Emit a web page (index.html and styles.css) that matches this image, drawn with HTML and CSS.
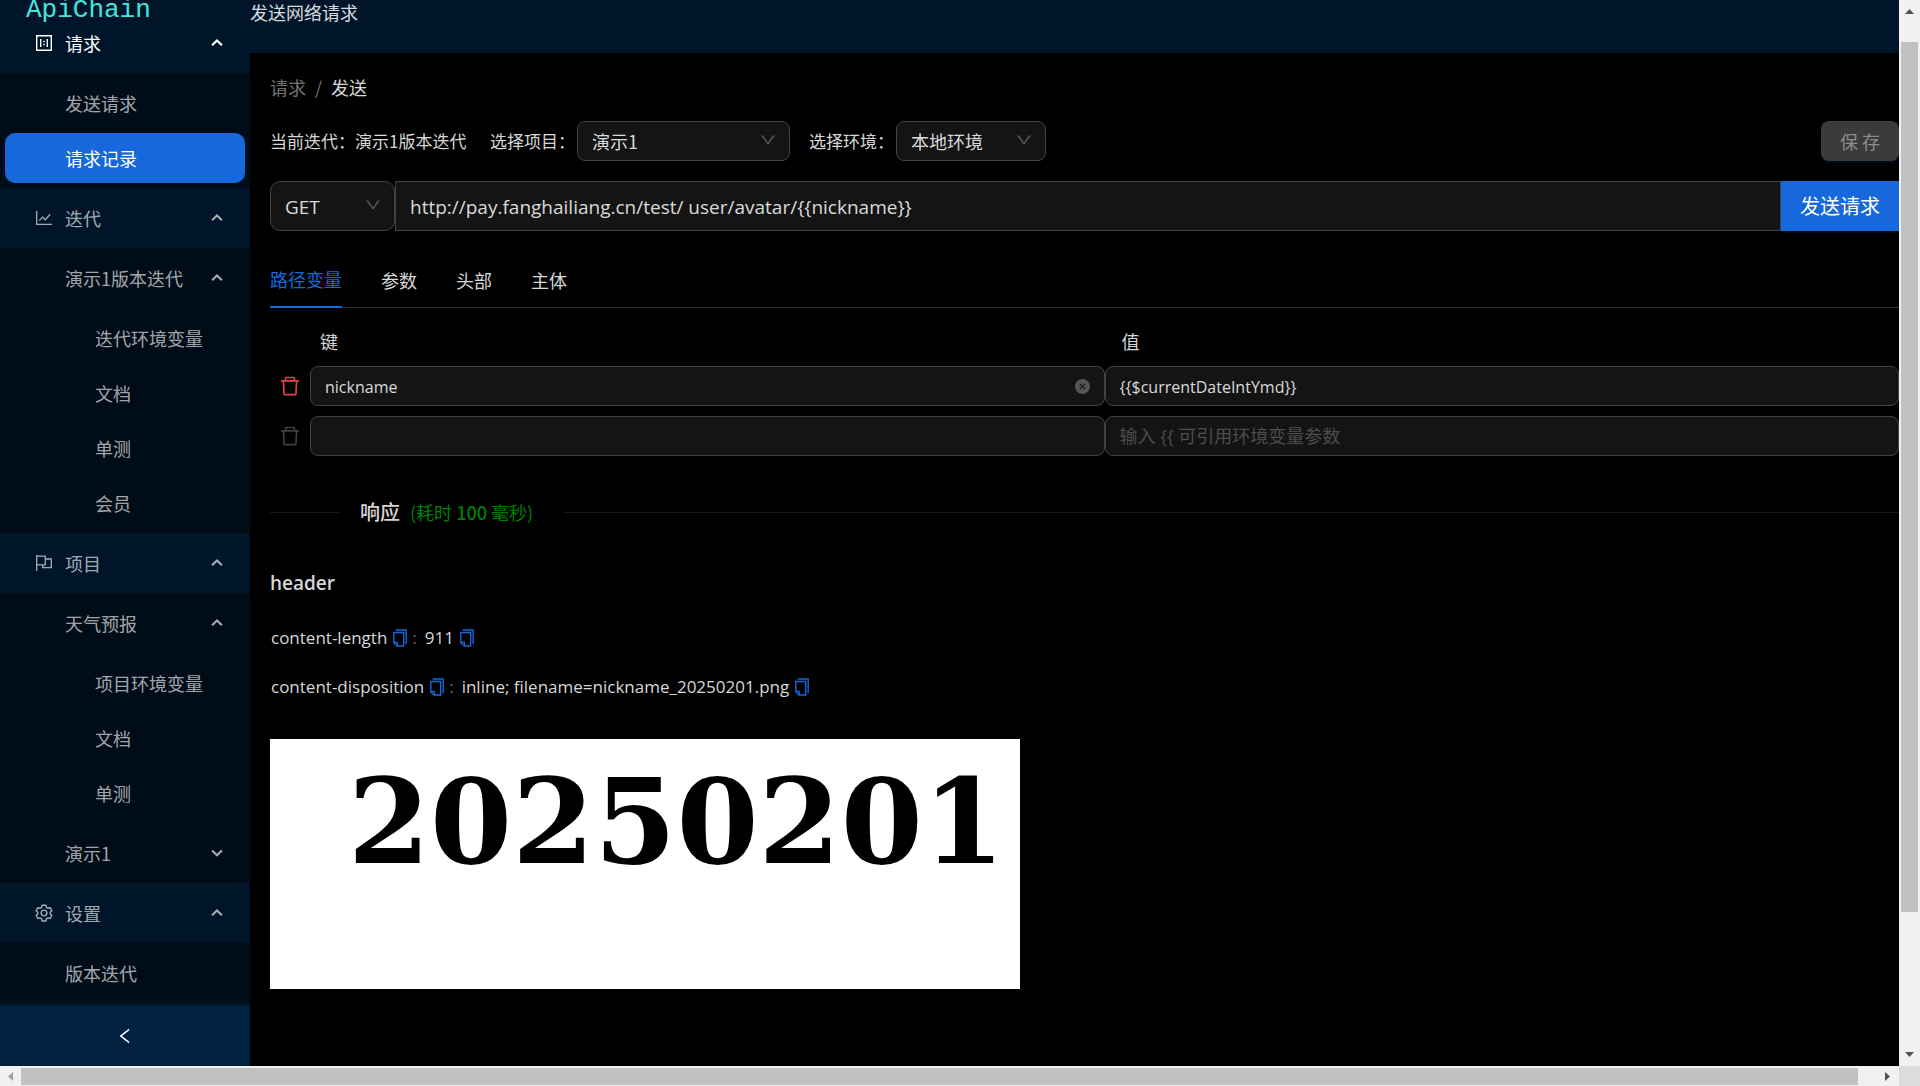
FILE: index.html
```html
<!DOCTYPE html>
<html lang="zh-CN">
<head>
<meta charset="utf-8">
<meta name="viewport" content="width=device-width, initial-scale=1">
<title>ApiChain</title>
<link rel="stylesheet" href="styles.css">
</head>
<body>
<svg class="sprite" aria-hidden="true">
  <symbol id="i-up" viewBox="0 0 12 12"><path d="M1.800 8 6 3.900l4.200 4.100" fill="none" stroke="currentColor" stroke-width="1.800"/></symbol>
  <symbol id="i-down" viewBox="0 0 12 12"><path d="M1.800 3.900 6 8l4.200-4.100" fill="none" stroke="currentColor" stroke-width="1.800"/></symbol>
  <symbol id="i-select" viewBox="0 0 1024 1024"><path fill="currentColor" d="M884 256h-75c-5.100 0-9.900 2.500-12.900 6.600L512 654.200 227.900 262.600c-3-4.100-7.800-6.600-12.900-6.600h-75c-6.500 0-10.300 7.400-6.500 12.700l352.600 486.100c12.800 17.600 39 17.600 51.700 0l352.600-486.100c3.900-5.300.1-12.700-6.400-12.700z"/></symbol>
  <symbol id="i-left" viewBox="0 0 1024 1024"><path fill="currentColor" d="M724 218.300V141c0-6.700-7.700-10.400-12.900-6.300L260.300 486.800a31.860 31.860 0 0 0 0 50.300l450.800 352.100c5.300 4.100 12.900.4 12.900-6.300v-77.300c0-4.900-2.300-9.600-6.100-12.600l-360-281 360-281.100c3.800-3 6.100-7.700 6.100-12.600z"/></symbol>
  <symbol id="i-trash" viewBox="0 0 1024 1024"><path fill="currentColor" d="M360 184h-8c4.400 0 8-3.600 8-8v8h304v-8c0 4.400 3.600 8 8 8h-8v72h72v-80c0-35.300-28.700-64-64-64H352c-35.300 0-64 28.700-64 64v80h72v-72zm504 72H160c-17.700 0-32 14.300-32 32v32c0 4.400 3.600 8 8 8h60.400l24.700 523c1.600 34.100 29.800 61 63.900 61h454c34.200 0 62.300-26.800 63.900-61l24.700-523H888c4.400 0 8-3.600 8-8v-32c0-17.700-14.300-32-32-32zM731.300 840H292.700l-24.200-512h487l-24.200 512z"/></symbol>
  <symbol id="i-copy" viewBox="0 0 1024 1024"><path fill="currentColor" d="M832 64H296c-4.400 0-8 3.600-8 8v56c0 4.400 3.600 8 8 8h496v688c0 4.400 3.600 8 8 8h56c4.400 0 8-3.600 8-8V96c0-17.700-14.300-32-32-32zM704 192H192c-17.700 0-32 14.300-32 32v530.700c0 8.500 3.400 16.600 9.400 22.600l173.300 173.300c2.200 2.200 4.700 4 7.400 5.500v1.900h4.200c3.500 1.300 7.200 2 11 2H704c17.700 0 32-14.300 32-32V224c0-17.700-14.300-32-32-32zM350 856.200 263.900 770H350v86.200zM664 888H414V746c0-22.100-17.900-40-40-40H232V264h432v624z"/></symbol>
  <symbol id="i-clear" viewBox="0 0 16 16"><circle cx="8" cy="8" r="8" fill="currentColor"/><path d="m5.200 5.200 5.600 5.600m0-5.600-5.600 5.600" stroke="#141414" stroke-width="1.300"/></symbol>
  <symbol id="i-ratio" viewBox="0 0 16 16"><path fill="none" stroke="currentColor" stroke-width="1.400" d="M.700.700h14.600v14.600H.700z"/><path fill="currentColor" d="M4 4h1.400v8H4zM10.600 4H12v8h-1.400zM7.300 5.700h1.400v1.500H7.300zM7.300 8.800h1.400v1.500H7.300z"/></symbol>
  <symbol id="i-chart" viewBox="0 0 16 16"><path fill="none" stroke="currentColor" stroke-width="1.300" d="M.7 1v13.300H16M3.300 10.600l3.200-3.500 2.700 2.600 5-5.500"/></symbol>
  <symbol id="i-flag" viewBox="0 0 16 16"><path fill="none" stroke="currentColor" stroke-width="1.300" d="M.7 0v16M.7 1.200h8.600v8.600H.7M9.500 4h5.800v8.700H6.700V9.800"/></symbol>
  <symbol id="i-gear" viewBox="0 0 18 18"><path fill="none" stroke="currentColor" stroke-width="1.400" stroke-linejoin="round" d="M7.200 1.200h3.600l.6 2.200 1.500.9 2.200-.6 1.800 3-1.600 1.600v1.600l1.600 1.600-1.800 3-2.200-.6-1.500.9-.6 2.200H7.200l-.6-2.200-1.500-.9-2.200.6-1.800-3 1.600-1.600V8.200L1.100 6.700l1.800-3 2.200.6 1.500-.9z"/><circle cx="9" cy="9" r="2.900" fill="none" stroke="currentColor" stroke-width="1.400"/></symbol>
</svg>
<div class="window">
  <div class="app">
    <aside class="sider">
      <div class="brand"><span class="logo">ApiChain</span></div>
      <nav class="menu">
        <button class="title current" type="button"><svg class="icon"><use href="#i-ratio"/></svg><span>请求</span><svg class="arrow"><use href="#i-up"/></svg></button>
        <div class="sub">
          <a class="item" href="#send">发送请求</a>
          <a class="item active" href="#history">请求记录</a>
        </div>
        <button class="title" type="button"><svg class="icon"><use href="#i-chart"/></svg><span>迭代</span><svg class="arrow"><use href="#i-up"/></svg></button>
        <div class="sub">
          <button class="item" type="button"><span>演示1版本迭代</span><svg class="arrow"><use href="#i-up"/></svg></button>
          <div class="nested">
            <a class="item" href="#iter-env">迭代环境变量</a>
            <a class="item" href="#iter-doc">文档</a>
            <a class="item" href="#iter-test">单测</a>
            <a class="item" href="#iter-member">会员</a>
          </div>
        </div>
        <button class="title" type="button"><svg class="icon"><use href="#i-flag"/></svg><span>项目</span><svg class="arrow"><use href="#i-up"/></svg></button>
        <div class="sub">
          <button class="item" type="button"><span>天气预报</span><svg class="arrow"><use href="#i-up"/></svg></button>
          <div class="nested">
            <a class="item" href="#prj-env">项目环境变量</a>
            <a class="item" href="#prj-doc">文档</a>
            <a class="item" href="#prj-test">单测</a>
          </div>
          <button class="item" type="button"><span>演示1</span><svg class="arrow"><use href="#i-down"/></svg></button>
        </div>
        <button class="title" type="button"><svg class="icon gear"><use href="#i-gear"/></svg><span>设置</span><svg class="arrow"><use href="#i-up"/></svg></button>
        <div class="sub">
          <a class="item" href="#versions">版本迭代</a>
        </div>
      </nav>
      <button class="trigger" type="button" aria-label="收起"><svg><use href="#i-left"/></svg></button>
    </aside>
    <main class="main">
      <header class="header">发送网络请求</header>
      <div class="content">
        <nav class="crumbs"><a href="#request">请求</a><span>/</span><b>发送</b></nav>
        <div class="toolbar">
          <span class="current-iter">当前迭代：演示1版本迭代</span>
          <div class="field"><label for="project">选择项目：</label><span class="select project"><select id="project"><option>演示1</option></select><svg><use href="#i-select"/></svg></span></div>
          <div class="field"><label for="env">选择环境：</label><span class="select env"><select id="env"><option>本地环境</option></select><svg><use href="#i-select"/></svg></span></div>
          <button class="save" type="button" disabled>保 存</button>
        </div>
        <form class="request">
          <span class="select method"><select aria-label="请求方法"><option>GET</option></select><svg><use href="#i-select"/></svg></span>
          <input class="url" type="text" aria-label="请求地址" value="http://pay.fanghailiang.cn/test/ user/avatar/{{nickname}}">
          <button class="send" type="button">发送请求</button>
        </form>
        <div class="tabs" role="tablist">
          <button class="tab on" type="button" role="tab">路径变量</button>
          <button class="tab" type="button" role="tab">参数</button>
          <button class="tab" type="button" role="tab">头部</button>
          <button class="tab" type="button" role="tab">主体</button>
        </div>
        <table class="params">
          <thead><tr><th class="tools"></th><th>键</th><th>值</th></tr></thead>
          <tbody>
            <tr>
              <td class="tools"><button class="remove" type="button" aria-label="删除"><svg><use href="#i-trash"/></svg></button></td>
              <td><div class="box"><input type="text" aria-label="键" value="nickname"><svg class="clear"><use href="#i-clear"/></svg></div></td>
              <td><div class="box"><input type="text" aria-label="值" value="{{$currentDateIntYmd}}"></div></td>
            </tr>
            <tr>
              <td class="tools"><button class="remove off" type="button" aria-label="删除" disabled><svg><use href="#i-trash"/></svg></button></td>
              <td><div class="box"><input type="text" aria-label="键"></div></td>
              <td><div class="box"><input type="text" aria-label="值" placeholder="输入 {{ 可引用环境变量参数"></div></td>
            </tr>
          </tbody>
        </table>
        <div class="divider"><h2>响应</h2><span class="time">(耗时 <b>100</b> 毫秒)</span></div>
        <h3 class="heading">header</h3>
        <dl class="headers">
          <div><dt>content-length<button class="copy" type="button" aria-label="复制"><svg><use href="#i-copy"/></svg></button><i>:</i></dt><dd>911<button class="copy" type="button" aria-label="复制"><svg><use href="#i-copy"/></svg></button></dd></div>
          <div><dt>content-disposition<button class="copy" type="button" aria-label="复制"><svg><use href="#i-copy"/></svg></button><i>:</i></dt><dd>inline; filename=nickname_20250201.png<button class="copy" type="button" aria-label="复制"><svg><use href="#i-copy"/></svg></button></dd></div>
        </dl>
        <div class="preview">20250201</div>
      </div>
    </main>
  </div>
  <div class="vbar"><svg viewBox="0 0 9 5"><path d="M4.500 0 9 5H0z"/></svg><div class="track"><div class="thumb"></div></div><svg viewBox="0 0 9 5"><path d="M4.500 5 9 0H0z"/></svg></div>
  <div class="hbar"><svg class="dim" viewBox="0 0 5 9"><path d="M0 4.500 5 0v9z"/></svg><div class="track"><div class="thumb"></div></div><svg viewBox="0 0 5 9"><path d="M5 4.500 0 0v9z"/></svg></div>
  <div class="corner"></div>
</div>
</body>
</html>
```
FILE: styles.css
```css
* { box-sizing: border-box; }
body {
  margin: 0;
  background: #000;
  color: rgba(255, 255, 255, .85);
  font: 18px/28px "Noto Sans CJK SC", sans-serif;
}
button, input, select { font: inherit; color: inherit; margin: 0; padding: 0; border: 0; background: none; }
a { color: inherit; text-decoration: none; }
svg { display: block; flex: none; }
.sprite { position: absolute; width: 0; height: 0; }

.window { display: grid; grid-template: minmax(0, 1fr) 20px / minmax(0, 1fr) 21px; height: 100vh; }
.app { display: flex; min-height: 0; overflow: hidden; }

/* sidebar */
.sider { display: flex; flex-direction: column; width: 250px; flex: none; background: #001529; color: rgba(255, 255, 255, .65); }
.brand { display: flex; align-items: flex-start; height: 13px; padding-left: 26px; flex: none; }
.logo { color: #4ae3dc; font: 26px/20px "Liberation Mono", monospace; }
.menu { flex: 1; min-height: 0; overflow: hidden; }
.title { display: flex; align-items: center; width: 100%; height: 60px; padding: 0 26px 0 36px; text-align: left; }
.title.current { color: #fff; }
.title span, .item span { flex: 1; }
.icon { width: 16px; height: 16px; margin-right: 13px; }
.icon.gear { width: 18px; height: 18px; margin: 0 12px 0 -1px; }
.arrow { width: 14px; height: 14px; }
.sub { display: flex; flex-direction: column; gap: 5px; padding: 5px 0; background: #000c17; }
.item { display: flex; align-items: center; height: 50px; margin: 0 5px; padding: 0 21px 0 60px; border-radius: 10px; text-align: left; }
.item.active { background: #1668dc; color: #fff; }
.nested { display: flex; flex-direction: column; gap: 5px; padding: 5px 0; }
.nested:last-child { padding-bottom: 0; }
.nested .item { padding-left: 90px; }
.trigger { display: flex; align-items: center; justify-content: center; height: 60px; flex: none; background: #002140; color: #fff; }
.trigger svg { width: 20px; height: 20px; }

/* main column */
.main { flex: 1; min-width: 0; }
.header { height: 53px; background: #001529; line-height: 24px; }
.content { padding: 20px 0 0 20px; }
.crumbs { display: flex; gap: 9px; color: rgba(255, 255, 255, .45); }
.crumbs b { color: rgba(255, 255, 255, .85); font-weight: 400; }
.toolbar { display: flex; align-items: center; gap: 19px; height: 40px; margin-top: 20px; white-space: nowrap; }
.current-iter { min-width: 201px; font-size: 17px; }
.field { display: flex; align-items: center; gap: 2px; }
.field label { font-size: 17px; }
.select { position: relative; display: flex; height: 40px; border: 1px solid #424242; border-radius: 8px; background: #141414; }
.select select { width: 100%; padding: 0 36px 0 14px; appearance: none; outline: 0; }
.select svg { position: absolute; right: 12px; top: 50%; width: 18px; height: 18px; margin-top: -10px; color: rgba(255, 255, 255, .3); pointer-events: none; }
.project { width: 213px; }
.env { width: 150px; }
.save { width: 78px; height: 40px; margin-left: auto; border-radius: 8px; background: #3b3b3b; color: #8c8c8c; box-shadow: 0 2px 0 #00081c; }
.request { display: flex; height: 50px; margin-top: 20px; font-family: "Open Sans", "Noto Sans CJK SC", sans-serif; }
.method { width: 125px; height: 50px; border-radius: 10px; font-size: 19px; }
.method select, .url { padding-top: 2px; }
.url { flex: 1; min-width: 0; padding-left: 14px; padding-right: 14px; border: 1px solid #424242; background: #141414; font-size: 19px; outline: 0; }
.send { width: 118px; padding-top: 2px; background: #1668dc; color: #fff; font-size: 20px; box-shadow: 0 2px 0 #000b1e; }
.tabs { display: flex; gap: 39px; height: 58px; margin-top: 19px; border-bottom: 1px solid #303030; }
.tab { height: 58px; padding-top: 2px; }
.tab.on { color: #1668dc; border-bottom: 2px solid #1668dc; }

.params { width: 100%; margin-top: 16px; border-collapse: collapse; table-layout: fixed; }
.params th { height: 37px; padding: 0 0 3px 10px; font-weight: 400; text-align: left; }
.params th:last-child { padding-left: 17px; }
.params td { padding: 5px 0; }
.params .tools { width: 40px; padding: 0; }
.remove { display: flex; width: 40px; justify-content: center; color: #dc4446; }
.remove.off { color: #3f3f3f; }
.remove svg { width: 24px; height: 24px; }
.box { display: flex; align-items: center; height: 40px; padding: 2px 14px 0; border: 1px solid #424242; border-radius: 8px; background: #141414; }
.box input { flex: 1; min-width: 0; font-family: "Open Sans", "Noto Sans CJK SC", sans-serif; font-size: 16px; outline: 0; }
.box input::placeholder { color: #4d4d4d; font-size: 18px; opacity: 1; }
.clear { width: 15px; height: 15px; margin-bottom: 2px; color: #555; }

.divider { display: flex; align-items: center; height: 30px; margin-top: 36px; }
.divider::before, .divider::after { content: ""; height: 1px; background: #161616; }
.divider::before { width: 70px; margin-right: 20px; }
.divider::after { flex: 1; margin-left: 30px; }
.divider h2 { margin: 0 10px 0 0; font-size: 20px; font-weight: 500; }
.time { color: #008000; }
.time b { font-weight: 500; }
.heading { margin: 42px 0 0; font: 600 19px/28px "Open Sans", sans-serif; }
.headers { margin: 27px 0 0; font: 17px/28px "Open Sans", sans-serif; }
.headers div { display: flex; gap: 8px; height: 49px; padding-left: 1px; }
.headers dt, .headers dd { display: flex; height: 28px; align-items: center; margin: 0; }
.headers i { color: rgba(255, 255, 255, .45); font-style: normal; }
.copy { margin: 0 2px 0 3px; color: #1668dc; }
.copy svg { width: 20px; height: 20px; }
.preview { max-width: 750px; height: 250px; margin-top: 17px; padding-left: 78px; overflow: hidden; background: #fff; color: #000; font: bold 118px/166px "DejaVu Serif", serif; }

/* scroll bars round the page */
.vbar, .hbar { display: flex; align-items: center; background: #f1f1f1; }
.vbar { flex-direction: column; padding: 9px 0; }
.hbar { padding: 0 9px 0 8px; }
.vbar svg { width: 9px; height: 5px; fill: #505050; }
.hbar svg { width: 5px; height: 9px; fill: #505050; }
.hbar .dim { fill: #a3a3a3; }
.track { display: flex; flex: 1; }
.vbar .track { flex-direction: column; width: 17px; padding: 28px 0 10px; }
.hbar .track { height: 17px; padding: 0 8px; }
.vbar .thumb { width: 17px; height: 87%; background: #c1c1c1; }
.hbar .thumb { width: 99%; height: 17px; background: #c1c1c1; }
.corner { background: #dcdcdc; }
```
